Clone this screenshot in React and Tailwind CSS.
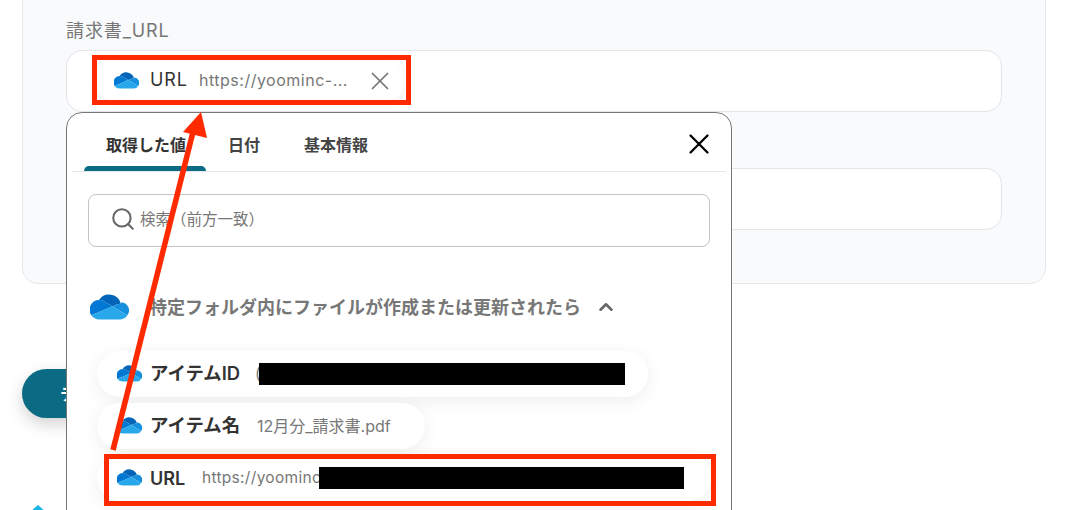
import React from "react";
import { Search, X, ChevronUp } from "lucide-react";

const OneDrive = ({ className }) => (
  <svg viewBox="1 5 31 21.5" className={className}>
    <path d="M12.20245 11.19292l.00031-.0011 6.71765 4.02379 4.00293-1.68451.00018.00068A6.4768 6.4768 0 0 1 25.5 13c.14764 0 .29358.0067.43878.01639a10.00075 10.00075 0 0 0-18.041-3.01381C7.932 10.00215 7.9657 10 8 10a7.96073 7.96073 0 0 1 4.20245 1.19292z" fill="#0364b8" />
    <path d="M12.20276 11.19182l-.00031.0011A7.96073 7.96073 0 0 0 8 10c-.0343 0-.06805.00215-.10223.00258A7.99676 7.99676 0 0 0 1.43732 22.57277l5.924-2.49292 2.63342-1.10819 5.86353-2.46746 3.06213-1.28859z" fill="#0078d4" />
    <path d="M25.93878 13.01639C25.79358 13.0067 25.64764 13 25.5 13a6.4768 6.4768 0 0 0-2.57648.53178l-.00018-.00068-4.00293 1.68451 1.16077.69528L23.88611 18.19l1.66009.99438 5.67633 3.40007a6.5002 6.5002 0 0 0-5.28375-10.56805z" fill="#1490df" />
    <path d="M25.5462 19.18437L23.88611 18.19l-3.80493-2.2791-1.16077-.69528-3.06213 1.28859-5.86353 2.46746L7.36128 20.08 1.43732 22.57277A7.99 7.99 0 0 0 8 26h17.5a6.49652 6.49652 0 0 0 5.72253-3.41556z" fill="#28a8ea" />
  </svg>
);

const Redacted = ({ className }) => <span className={`relative block h-[22px] shrink-0 bg-black ${className}`} />;

const App = () => {
  return (
    <div
      className="relative h-[510px] w-[1068px] overflow-hidden bg-white px-[22px] text-[#333]"
      style={{ fontFamily: "Inter, 'Noto Sans CJK JP', sans-serif" }}
    >
      {/* form card */}
      <div className="-mt-[20px] h-[304px] w-[1024px] rounded-b-2xl border border-[#e5e7eb] bg-[#f9fafb] px-[43px] pt-[38px]">
        <p className="h-[24px] text-[18px] leading-[24px] tracking-[0.9px] text-[#777]">請求書_URL</p>
        <div className="mt-[7px] flex h-[62px] w-[936px] items-center rounded-2xl border border-[#e2e5ea] bg-white pl-[28px]">
          <div className="flex h-[40px] w-[310px] items-center rounded-full bg-white pl-[19px] shadow-[0_2px_8px_rgba(0,0,0,0.06)]">
            <OneDrive className="mb-[1px] h-[17px] w-[25px] shrink-0" />
            <span className="mb-[3px] ml-[11px] w-[49px] text-[18px] tracking-[0.9px] text-[#333]">URL</span>
            <span className="mb-[3px] w-[166px] whitespace-nowrap text-[16px] tracking-[0.5px] text-[#777]">https://yoominc-...</span>
            <X className="h-[30px] w-[30px] text-[#777]" strokeWidth={1.4} />
          </div>
        </div>
        <div className="mt-[56px] h-[62px] w-[936px] rounded-2xl border border-[#e2e5ea] bg-white" />
      </div>

      <button className="mt-[85px] block h-[49px] w-[124px] rounded-full bg-[#0b6a84] text-[16px] font-bold text-white shadow-[0_6px_16px_rgba(0,0,0,0.18)]">
        テスト
      </button>

      <svg viewBox="0 0 20 20" className="ml-[6px] mt-[87px] h-[20px] w-[20px]">
        <path d="M10 0l8 7-8 7-8-7z" fill="#1ab5e8" />
      </svg>

      {/* variable picker */}
      <div className="absolute left-[66px] top-[112px] h-[420px] w-[666px] rounded-t-2xl border border-[#777] bg-white">
        <div className="relative mx-[5px] flex h-[59px] items-center border-b border-[#e5e7eb] pl-[34px] pt-[6px] text-[16px] font-semibold text-[#444]">
          <span className="w-[122px] text-[#333]">取得した値</span>
          <span className="w-[76px]">日付</span>
          <span>基本情報</span>
          <span className="absolute bottom-0 left-[12px] h-[5px] w-[122px] rounded-t-md bg-[#0b6a84]" />
          <X className="absolute right-[10px] top-[14px] h-[34px] w-[34px] text-black" strokeWidth={1.6} />
        </div>

        <div className="mx-[21px] mt-[22px] flex h-[53px] w-[622px] items-center rounded-lg border border-[#c4c4c4] pl-[21px] text-[15.5px] text-[#777]">
          <Search className="mb-[3px] h-[26px] w-[26px] text-[#666]" strokeWidth={1.9} />
          <span className="mb-[2px] ml-[4px]">検索（前方一致）</span>
        </div>

        <div className="ml-[23px] mt-[46px] flex h-[28px] items-center">
          <OneDrive className="h-[26px] w-[39px] shrink-0" />
          <span className="ml-[20px] text-[18px] font-semibold text-[#777]">特定フォルダ内にファイルが作成または更新されたら</span>
          <ChevronUp className="ml-[14px] h-[22px] w-[22px] text-[#666]" strokeWidth={2.8} />
        </div>

        <div className="ml-[30px] mt-[30px] flex flex-col items-start gap-[6px]">
          <div className="flex h-[46px] w-[551px] items-center rounded-full bg-white pl-[20px] shadow-[0_4px_18px_rgba(0,0,0,0.07)]">
            <OneDrive className="mb-[2px] h-[17px] w-[25px] shrink-0" />
            <span className="ml-[8px] w-[105px] text-[18.4px] font-semibold">アイテムID</span>
            <span className="w-[4px] text-[15.5px] text-[#777]">(</span>
            <Redacted className="w-[366px]" />
          </div>
          <div className="flex h-[46px] w-[328px] items-center rounded-full bg-white pl-[20px] shadow-[0_4px_18px_rgba(0,0,0,0.07)]">
            <OneDrive className="mb-[2px] h-[17px] w-[25px] shrink-0" />
            <span className="ml-[8px] w-[107px] text-[18.4px] font-semibold">アイテム名</span>
            <span className="text-[16px] text-[#777]">12月分_請求書.pdf</span>
          </div>
          <div className="flex h-[46px] w-[614px] items-center rounded-full bg-white pl-[20px] shadow-[0_4px_18px_rgba(0,0,0,0.07)]">
            <OneDrive className="mb-[2px] h-[17px] w-[25px] shrink-0" />
            <span className="ml-[8px] w-[52px] text-[18px] font-semibold">URL</span>
            <span className="w-[117px] whitespace-nowrap text-[15.5px] tracking-[0.3px] text-[#777]">https://yoominc</span>
            <Redacted className="w-[365px]" />
          </div>
        </div>
      </div>

      {/* red annotations */}
      <div className="pointer-events-none absolute left-[92px] top-[55px] h-[50px] w-[319px] border-[5px] border-[#ff2a00]" />
      <div className="pointer-events-none absolute left-[104px] top-[454px] h-[52px] w-[612px] border-[5px] border-[#ff2a00]" />
      <svg className="pointer-events-none absolute left-0 top-0 h-[510px] w-[1068px]" viewBox="0 0 1068 510">
        <line x1="113" y1="450" x2="193" y2="132" stroke="#ff2a00" strokeWidth="5.5" />
        <path d="M201 112L207 138L183 132Z" fill="#ff2a00" />
      </svg>
    </div>
  );
};

export default App;
